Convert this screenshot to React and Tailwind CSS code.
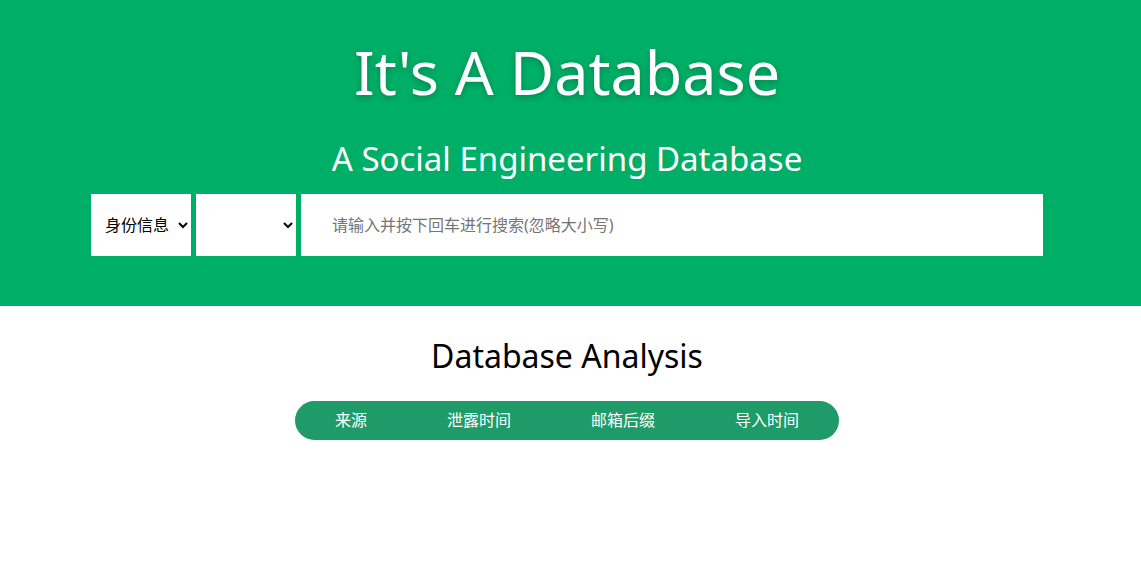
const TABS = ['来源', '泄露时间', '邮箱后缀', '导入时间']

const FONT = "font-['Segoe_UI','Noto_Sans','Noto_Sans_CJK_SC',sans-serif]"

const App = () => {
  return (
    <div className={`min-h-[579px] bg-white ${FONT}`}>
      <header className="flex h-[306px] flex-col items-center bg-[#00af67] pt-[30px] pr-[7px]">
        <h1 className="text-[61px] leading-[84px] font-normal text-white [text-shadow:0_2px_6px_rgba(0,0,0,0.25)]">
          It&apos;s A Database
        </h1>
        <h2 className="mt-[23px] text-[33px] leading-[44px] font-normal text-white">A Social Engineering Database</h2>
        <div className="mt-[13px] flex w-[952px] gap-[5px]">
          <select className="h-[62px] w-[100px] bg-white pl-[10px] text-[16px] text-black outline-none">
            <option>身份信息</option>
          </select>
          <select className="h-[62px] w-[100px] bg-white text-[16px] text-black outline-none">
            <option></option>
          </select>
          <input
            className="h-[62px] flex-1 bg-white pl-[31px] text-[16px] text-black outline-none placeholder:text-[#757575]"
            placeholder="请输入并按下回车进行搜索(忽略大小写)"
          />
        </div>
      </header>

      <section className="flex flex-col items-center pt-[28px] pr-[7px]">
        <h3 className="text-[32px] leading-[44px] font-normal text-black">Database Analysis</h3>
        <nav className="mt-[23px] flex h-[39px] items-center rounded-full bg-[#1f9b6a]">
          {TABS.map((tab) => (
            <span key={tab} className="px-[40px] text-[16px] leading-[39px] text-white">
              {tab}
            </span>
          ))}
        </nav>
      </section>
    </div>
  )
}

export default App
